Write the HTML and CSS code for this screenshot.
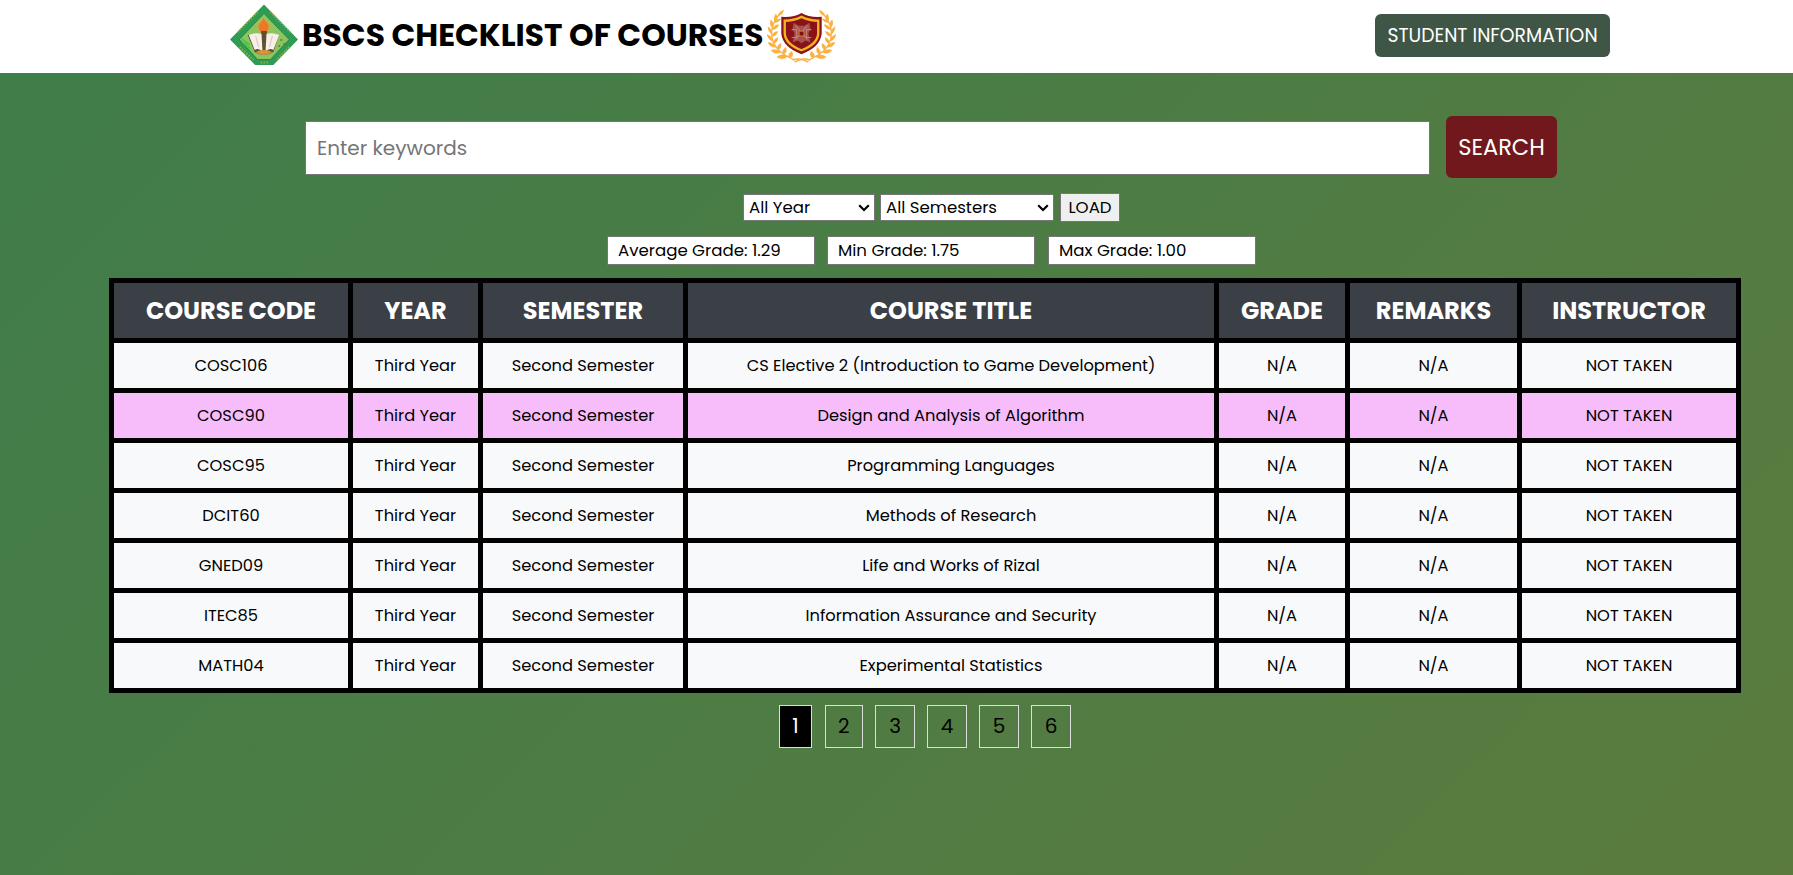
FILE: index.html
```
<!DOCTYPE html>
<html lang="en">
<head>
<meta charset="utf-8">
<title>BSCS Checklist of Courses</title>
<link rel="stylesheet" href="styles.css">
</head>
<body>
<header class="topbar">
  <div class="brand">
    <svg class="seal" viewBox="0 0 70 62" preserveAspectRatio="none">
      <path d="M34.500 0.500 69 35.500 44 61H25.500L0 35.500Z" fill="#2f9b54"/>
      <path d="M34.500 9.500 60 35.500 41 55.500H28L9.500 35.500Z" fill="#8cc560" stroke="#1f7f3d" stroke-width=".8"/>
      <path d="M8 28 28 8M41 8 62 29M10 43 24 56M60 43 47 56M31 58.500h8" stroke="#9fb83f" stroke-width="2" stroke-dasharray="1.500 1.500" fill="none" opacity=".8"/>
      <circle cx="34" cy="22" r="7.500" fill="#c9ad43" opacity=".65"/>
      <path d="M34 14c1 3 6 5 5 10-.5 3-2 4-5 4s-5-2-5-5c0-4 4-5 5-9Z" fill="#f0762b"/>
      <path d="M31.500 27h6l-1 21h-4Z" fill="#6d4a25"/>
      <path d="M18 31 25 48Q34 54 44 48L50 31" fill="#5d5134"/>
      <path d="M19 31Q26 28 32 30L33 48Q29 43 25 46Z" fill="#f7eee7"/>
      <path d="M50 31Q43 28 37 30L36 48Q40 43 44 46Z" fill="#f7eee7"/>
      <path d="M26 32l3 11M43 32l-3 11" stroke="#d5c5be"/>
      <path d="M26 48Q34 44 43 48Q34 54 26 48Z" fill="#d9923a"/>
      <path d="m12 35 8 6M14 39l7 6" stroke="#4ec44f" stroke-width="2"/>
      <path d="M51 36h2m1 4h2m-7 2h2" stroke="#55793d" stroke-width="1.500"/>
    </svg>
    <h1 class="title">BSCS CHECKLIST OF COURSES</h1>
    <svg class="crest" viewBox="0 0 70 54" preserveAspectRatio="none">
      <g id="laurel" fill="#fbb040">
        <path d="M14 3Q3 14 5 28Q8 43 28 51" fill="none" stroke="#fbb040" stroke-width="1.200"/>
        <path d="M17 0Q16 5 11 6Q12 2 17 0ZM9 4Q12 8 8 12Q6 8 9 4ZM14 9Q12 13 7 13Q9 9 14 9ZM4 10Q8 14 5 18Q2 14 4 10ZM12 15Q10 20 5 20Q7 15 12 15ZM1 17Q6 20 5 25Q1 22 1 17ZM11 22Q9 27 5 27Q6 22 11 22ZM0 25Q6 27 6 32Q1 30 0 25ZM11 28Q11 33 7 34Q6 30 11 28ZM1 33Q7 33 9 38Q3 38 1 33ZM14 34Q15 39 11 41Q9 37 14 34ZM4 41Q10 39 14 43Q8 46 4 41ZM19 38Q21 43 17 45Q14 42 19 38ZM10 48Q15 44 21 47Q16 52 10 48ZM25 42Q28 47 23 49Q20 46 25 42Z" stroke="#fbb040" stroke-width=".5"/>
        <path d="M26 51Q34 48 42 53" fill="none" stroke="#fbb040" stroke-width="1.500"/>
      </g>
      <use href="#laurel" transform="translate(70 0) scale(-1 1)"/>
      <path d="M35 3Q43 8 55.500 7V24Q54 38 35 45Q16 38 14.500 24V7Q27 8 35 3Z" fill="#8b1218"/>
      <path d="M35 7Q43 11 52 11V24Q51 35 35 41Q19 35 18 24V11Q27 11 35 7Z" fill="#8b1218" stroke="#f3b51f" stroke-width="2.400"/>
      <path d="M27 13l5 3h6l5-3 1 6-2 5 2 9-5-2-4 3-4-3-5 2 2-9-2-5Z" fill="#a9504c"/>
      <path d="M29 16l12 14M41 16 29 30M25 20h5v8h-5M45 20h-5v8h5" fill="none" stroke="#c08078" stroke-width="1.100"/>
      <path d="M32.500 21.500h5v5h-5Z" fill="#7b1015" stroke="#e07f22"/>
    </svg>
  </div>
  <a class="student">STUDENT INFORMATION</a>
</header>
<main>
  <form class="search">
    <input class="keywords" type="text" placeholder="Enter keywords">
    <button class="search-btn" type="button">SEARCH</button>
  </form>
  <div class="filters">
    <select class="year"><option>All Year</option></select>
    <select class="semester"><option>All Semesters</option></select>
    <button class="load" type="button">LOAD</button>
  </div>
  <div class="stats">
    <div class="stat">Average Grade: 1.29</div>
    <div class="stat">Min Grade: 1.75</div>
    <div class="stat max">Max Grade: 1.00</div>
  </div>
  <table class="courses">
    <colgroup><col class="c-code"><col class="c-year"><col class="c-sem"><col class="c-title"><col class="c-grade"><col class="c-rem"><col class="c-inst"></colgroup>
    <thead><tr><th>COURSE CODE</th><th>YEAR</th><th>SEMESTER</th><th>COURSE TITLE</th><th>GRADE</th><th>REMARKS</th><th>INSTRUCTOR</th></tr></thead>
    <tbody>
      <tr><td>COSC106</td><td>Third Year</td><td>Second Semester</td><td>CS Elective 2 (Introduction to Game Development)</td><td>N/A</td><td>N/A</td><td>NOT TAKEN</td></tr>
      <tr class="hover"><td>COSC90</td><td>Third Year</td><td>Second Semester</td><td>Design and Analysis of Algorithm</td><td>N/A</td><td>N/A</td><td>NOT TAKEN</td></tr>
      <tr><td>COSC95</td><td>Third Year</td><td>Second Semester</td><td>Programming Languages</td><td>N/A</td><td>N/A</td><td>NOT TAKEN</td></tr>
      <tr><td>DCIT60</td><td>Third Year</td><td>Second Semester</td><td>Methods of Research</td><td>N/A</td><td>N/A</td><td>NOT TAKEN</td></tr>
      <tr><td>GNED09</td><td>Third Year</td><td>Second Semester</td><td>Life and Works of Rizal</td><td>N/A</td><td>N/A</td><td>NOT TAKEN</td></tr>
      <tr><td>ITEC85</td><td>Third Year</td><td>Second Semester</td><td>Information Assurance and Security</td><td>N/A</td><td>N/A</td><td>NOT TAKEN</td></tr>
      <tr><td>MATH04</td><td>Third Year</td><td>Second Semester</td><td>Experimental Statistics</td><td>N/A</td><td>N/A</td><td>NOT TAKEN</td></tr>
    </tbody>
  </table>
  <nav class="pages"><a class="p1">1</a><a class="p2">2</a><a class="p3">3</a><a>4</a><a>5</a><a>6</a></nav>
</main>
</body>
</html>
```
FILE: styles.css
```
* { box-sizing: border-box; }
body {
  margin: 0;
  min-height: 875px;
  font-family: Poppins, Inter, sans-serif;
  font-size: 16px;
  color: #000;
  background: linear-gradient(135deg, #3f7d4a 0%, #5b7b3e 100%);
}
input, select, button { font-family: inherit; margin: 0; }
.topbar {
  height: 73px;
  background: #fff;
  display: flex;
  justify-content: space-between;
  padding: 0 183px 0 230px;
}
.brand { display: flex; align-items: flex-start; }
.seal { width: 69px; height: 62px; margin-top: 4px; }
.crest { width: 69px; height: 53px; margin: 10px 0 0 4px; }
.title {
  margin: 0 0 0 3px;
  width: 461px;
  font-size: 31.250px;
  line-height: 70px;
  font-weight: 700;
  white-space: nowrap;
}
.student {
  width: 235px;
  height: 43px;
  margin-top: 14px;
  border-radius: 6px;
  background: #3f5546;
  color: #fff;
  font-size: 18.800px;
  line-height: 43px;
  text-align: center;
  white-space: nowrap;
}
.search {
  display: flex;
  align-items: center;
  gap: 16px;
  padding: 43px 0 0 305px;
}
.keywords {
  width: 1125px;
  height: 54px;
  margin-top: 1px;
  padding: 0 11px;
  border: 1px solid #767676;
  background: #fff;
  font-size: 20px;
}
.keywords::placeholder { color: #757575; }
.search-btn {
  width: 111px;
  height: 62px;
  padding: 0;
  border: 0;
  border-radius: 6px;
  background: #70181b;
  color: #fff;
  font-size: 22.500px;
}
.filters {
  display: flex;
  align-items: center;
  padding: 15px 0 0 743px;
}
.filters select {
  appearance: none;
  height: 27px;
  border: 1px solid #767676;
  border-radius: 0;
  background: #fff url("data:image/svg+xml,%3Csvg xmlns='http://www.w3.org/2000/svg' width='12' height='8'%3E%3Cpath d='M1.2 1.2 6 6l4.800-4.800' fill='none' stroke='black' stroke-width='2.200'/%3E%3C/svg%3E") no-repeat right 4px center;
  color: #000;
  font-size: 16.600px;
  padding: 0 5px;
}
.filters .year { width: 132px; }
.filters .semester { width: 174px; margin-left: 5px; }
.load {
  width: 60px;
  height: 29px;
  margin-left: 6px;
  padding: 0;
  border: 1px solid #767676;
  background: #efefef;
  color: #000;
  font-size: 16.600px;
}
.stats { display: flex; gap: 12px; padding: 14px 0 0 607px; }
.stat {
  width: 208px;
  height: 29px;
  padding-left: 10px;
  border: 1px solid #767676;
  background: #fff;
  font-size: 16.600px;
  line-height: 27px;
  white-space: nowrap;
}
.stat.max { margin-left: 1px; }
.courses {
  width: 1632px;
  margin: 13px 0 0 109px;
  table-layout: fixed;
  border-collapse: separate;
  border-spacing: 5px;
  background: #000;
  text-align: center;
}
.c-code { width: 234px; }
.c-year { width: 125px; }
.c-sem { width: 200px; }
.c-title { width: 526px; }
.c-grade { width: 126px; }
.c-rem { width: 167px; }
.c-inst { width: 214px; }
.courses th, .courses td { padding: 0; white-space: nowrap; }
.courses th { height: 55px; background: #3b3f46; color: #fff; font-size: 24px; font-weight: 700; }
.courses td { height: 45px; background: #f8f9fb; font-size: 16.270px; }
.courses .hover td { background: #f7bdfb; }
.pages { display: flex; gap: 12.600px; padding: 12px 0 0 779px; }
.pages a {
  height: 43px;
  width: 39.500px;
  border: 1px solid #ddd;
  font-size: 20px;
  line-height: 41px;
  text-align: center;
}
.pages .p1 { width: 33px; background: #000; color: #fff; }
.pages .p2 { width: 38.300px; }
.pages .p3 { width: 39.200px; }
```
